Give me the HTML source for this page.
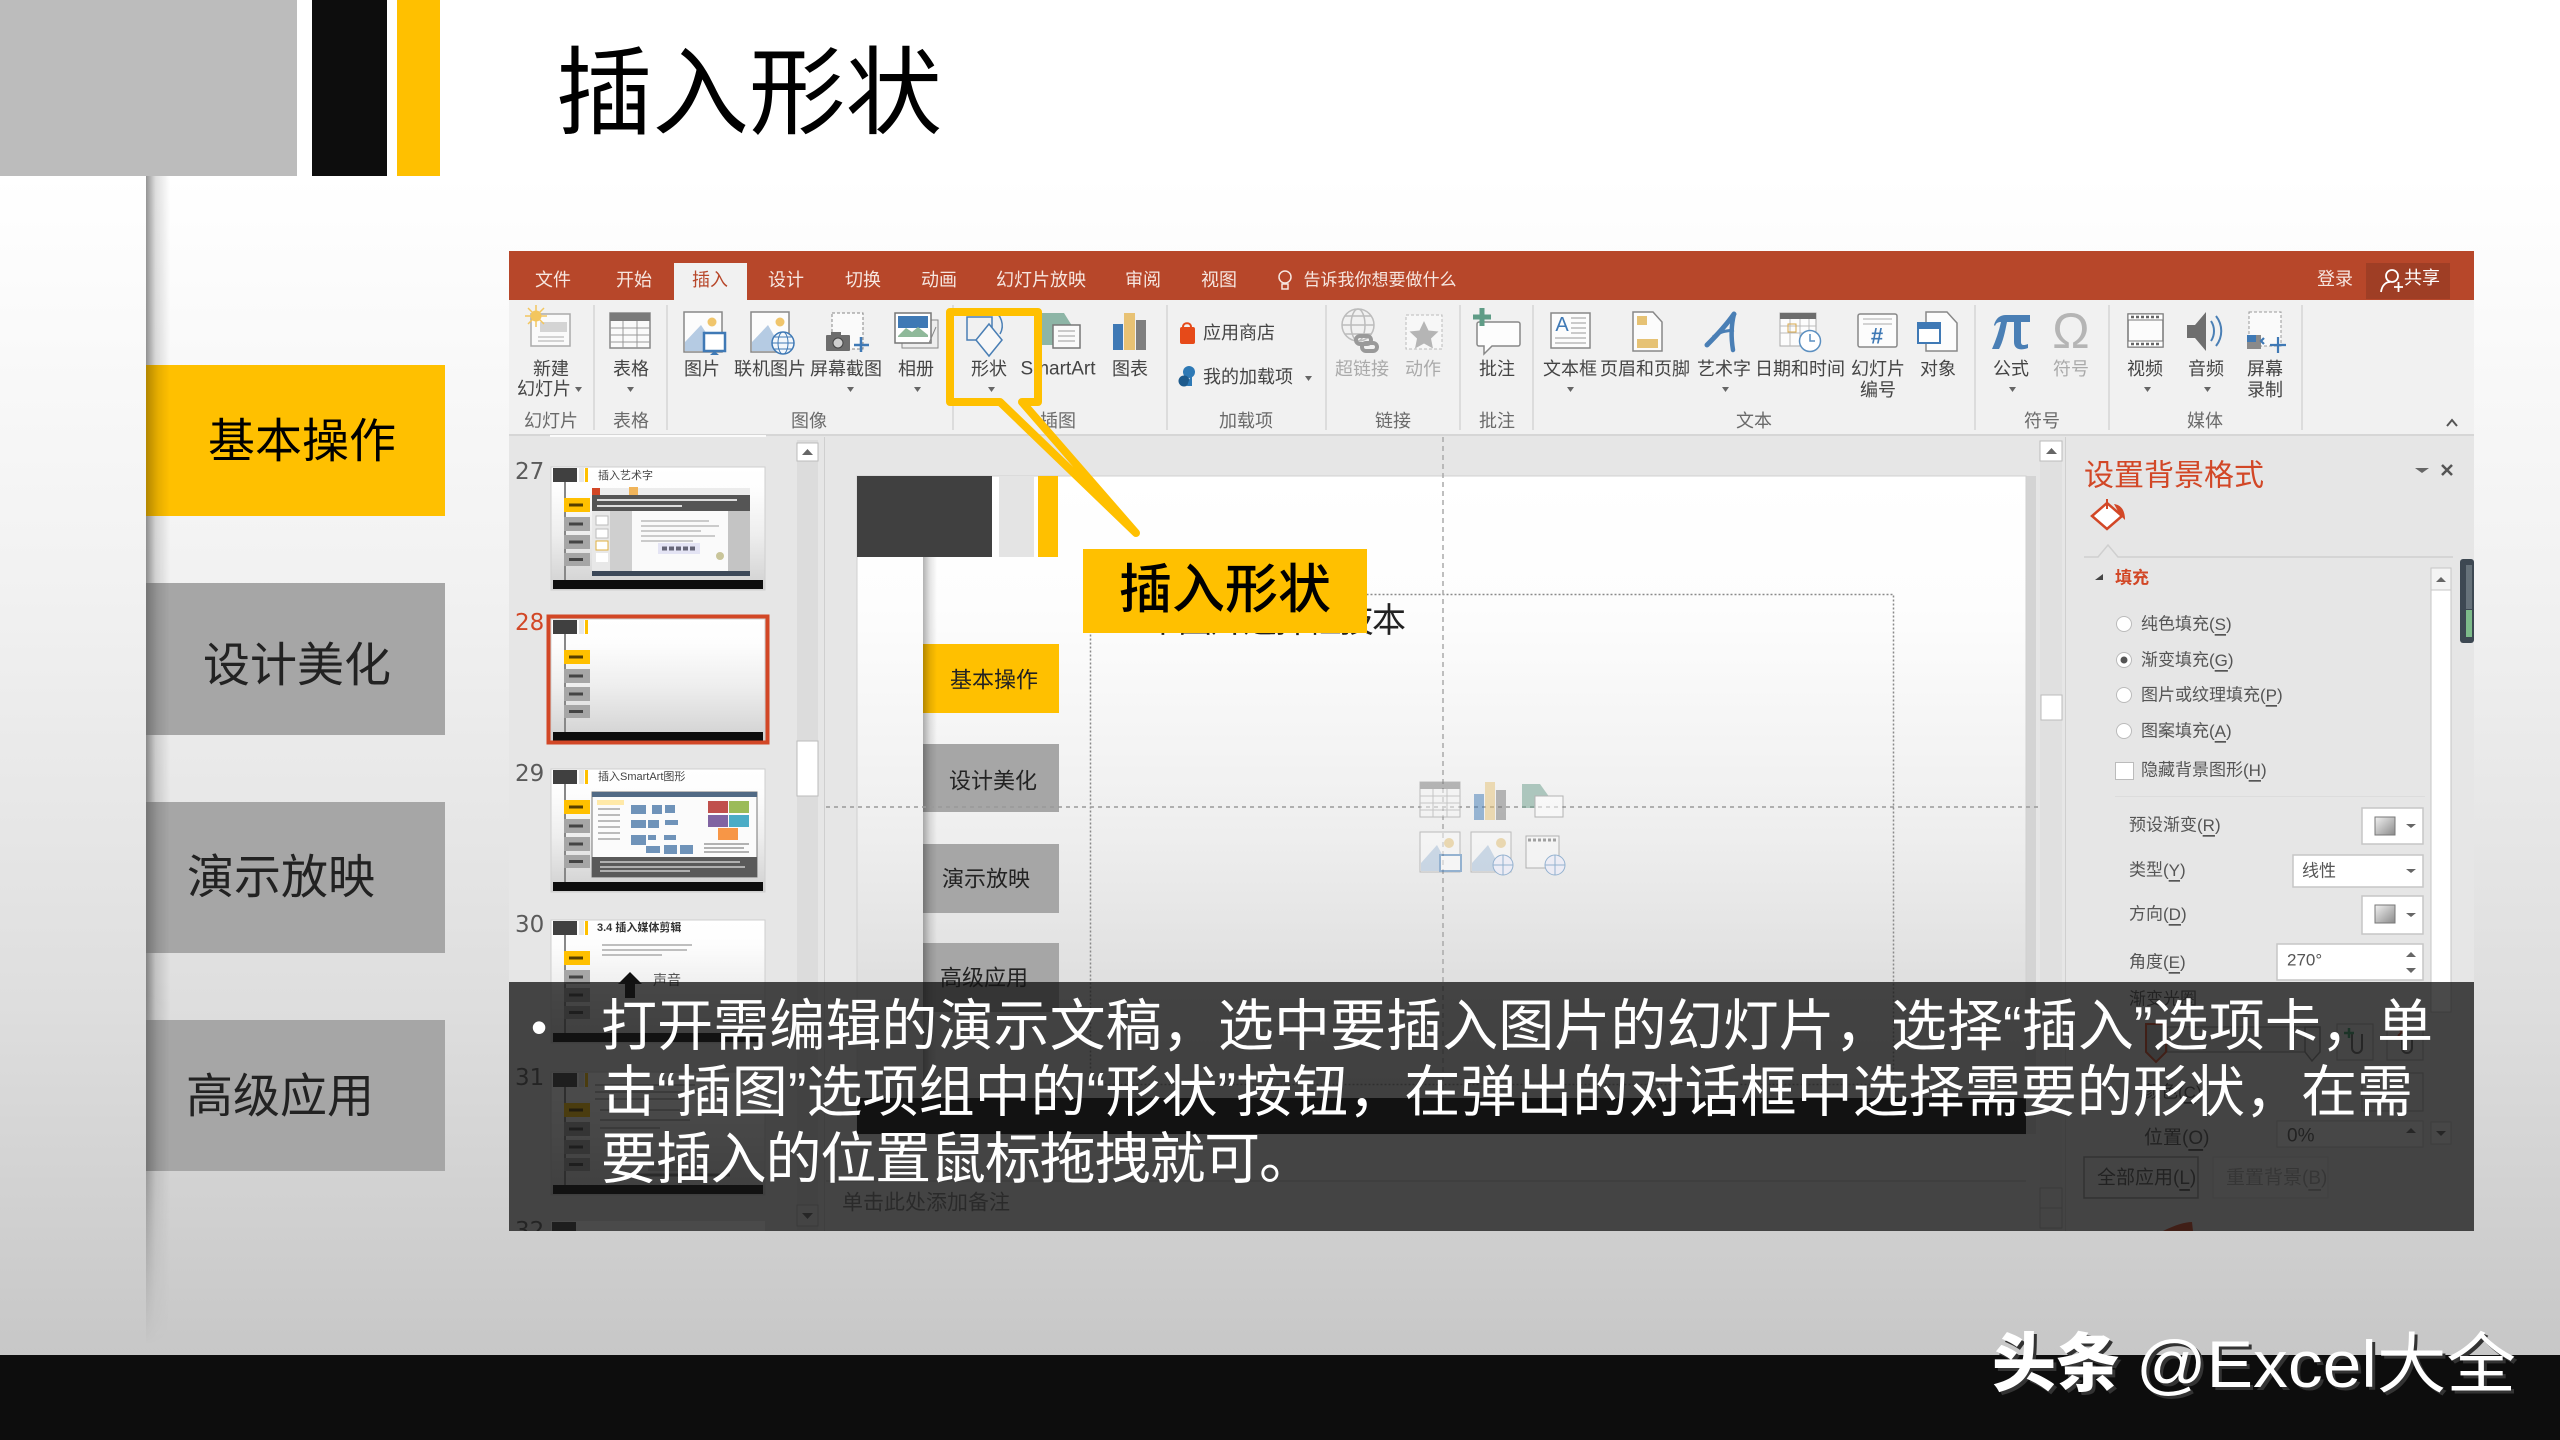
<!DOCTYPE html>
<html lang="zh-CN">
<head>
<meta charset="utf-8">
<title>插入形状</title>
<style>
html,body{margin:0;padding:0;width:2560px;height:1440px;overflow:hidden;background:#fff}
svg{display:block;position:absolute;left:0;top:0}
text{font-family:"Liberation Sans","Noto Sans CJK SC",sans-serif;dominant-baseline:central}
.r text{font-size:18px;fill:#444;text-anchor:middle}
.g text{font-size:18px;fill:#6a6a6a;text-anchor:middle}
.tab text{font-size:18px;fill:#f6e6e0;text-anchor:middle}
.p text{font-size:17px;fill:#555}
.ln{stroke:#d6d6d6;stroke-width:1.5}
</style>
</head>
<body>
<svg width="2560" height="1440" viewBox="0 0 2560 1440" xmlns="http://www.w3.org/2000/svg">
<defs>
<linearGradient id="bg" x1="0" y1="0" x2="0" y2="1">
<stop offset="0" stop-color="#ffffff"/><stop offset=".13" stop-color="#ffffff"/><stop offset=".44" stop-color="#f1f1f1"/><stop offset=".74" stop-color="#dedede"/><stop offset="1" stop-color="#c7c7c7"/>
</linearGradient>
<linearGradient id="sl" x1="0" y1="0" x2="0" y2="1">
<stop offset="0" stop-color="#ffffff"/><stop offset=".2" stop-color="#fdfdfd"/><stop offset=".55" stop-color="#eeeeee"/><stop offset="1" stop-color="#d0d0d0"/>
</linearGradient>
<linearGradient id="sh" x1="0" y1="0" x2="1" y2="0">
<stop offset="0" stop-color="#000" stop-opacity=".42"/><stop offset=".4" stop-color="#000" stop-opacity=".13"/><stop offset="1" stop-color="#000" stop-opacity="0"/>
</linearGradient>
<linearGradient id="sb" x1="0" y1="0" x2="1" y2="0">
<stop offset="0" stop-color="#000" stop-opacity=".3"/><stop offset=".5" stop-color="#000" stop-opacity=".1"/><stop offset="1" stop-color="#000" stop-opacity="0"/>
</linearGradient>
<linearGradient id="fade" gradientUnits="userSpaceOnUse" x1="0" y1="176" x2="0" y2="1345">
<stop offset="0" stop-color="#fff"/><stop offset=".7" stop-color="#fff"/><stop offset=".85" stop-color="#aaa"/><stop offset="1" stop-color="#000"/>
</linearGradient>
<linearGradient id="sw" x1="0" y1="0" x2="1" y2="1">
<stop offset="0" stop-color="#f2f2f2"/><stop offset="1" stop-color="#8a8a8a"/>
</linearGradient>
<mask id="m1" maskUnits="userSpaceOnUse" x="140" y="170" width="40" height="1190">
<rect x="140" y="170" width="40" height="1190" fill="url(#fade)"/>
</mask>
<clipPath id="c1"><rect x="509" y="1100" width="60" height="131"/></clipPath>
<g id="tb">
<rect width="214" height="123" fill="url(#sl)" stroke="#cfcfcf"/>
<rect x="2" y="1" width="24" height="14" fill="#404040"/>
<rect x="28" y="1" width="5" height="14" fill="#e8e8e8"/>
<rect x="34" y="1" width="3" height="14" fill="#ffc000"/>
<rect x="13" y="15" width="2" height="98" fill="#888"/>
<rect x="13" y="31" width="26" height="14" fill="#ffc000"/>
<rect x="13" y="50" width="26" height="14" fill="#a6a6a6"/>
<rect x="13" y="68" width="26" height="14" fill="#a6a6a6"/>
<rect x="13" y="86" width="26" height="13" fill="#a6a6a6"/>
<rect x="18" y="36.500" width="14" height="3" fill="#553f00"/>
<rect x="18" y="55.500" width="14" height="3" fill="#444"/>
<rect x="18" y="73.500" width="14" height="3" fill="#444"/>
<rect x="18" y="91" width="14" height="3" fill="#444"/>
<rect x="2" y="113" width="210" height="9" fill="#0d0d0d"/>
</g>
</defs>

<!-- page background -->
<rect x="0" y="0" width="2560" height="1356" fill="url(#bg)"/>
<rect x="146" y="176" width="24" height="1180" fill="url(#sh)" mask="url(#m1)"/>
<rect x="0" y="0" width="297" height="176" fill="#bcbcbc"/>
<rect x="312" y="0" width="75" height="176" fill="#0d0d0d"/>
<rect x="397" y="0" width="43" height="176" fill="#ffc000"/>
<text x="556" y="94" font-size="96" fill="#000" textLength="386" lengthAdjust="spacingAndGlyphs">插入形状</text>

<!-- sidebar -->
<rect x="146" y="365" width="299" height="151" fill="#ffc000"/>
<rect x="146" y="583" width="299" height="152" fill="#a6a6a6"/>
<rect x="146" y="802" width="299" height="151" fill="#a6a6a6"/>
<rect x="146" y="1020" width="299" height="151" fill="#a6a6a6"/>
<rect x="146" y="365" width="24" height="151" fill="url(#sb)"/>
<rect x="146" y="583" width="24" height="152" fill="url(#sb)"/>
<rect x="146" y="802" width="24" height="151" fill="url(#sb)"/>
<rect x="146" y="1020" width="24" height="151" fill="url(#sb)"/>
<g font-size="47" text-anchor="middle">
<text x="302" y="441" fill="#000">基本操作</text>
<text x="297" y="665" fill="#222">设计美化</text>
<text x="281" y="877" fill="#222">演示放映</text>
<text x="280" y="1096" fill="#222">高级应用</text>
</g>

<!-- screenshot: tabs -->
<rect x="509" y="251" width="1965" height="49" fill="#b7472a"/>
<rect x="674" y="263" width="73" height="38" fill="#f1f1f1"/>
<g class="tab">
<text x="553" y="280">文件</text><text x="634" y="280">开始</text>
<text x="710" y="280" style="fill:#b7472a">插入</text>
<text x="786" y="280">设计</text><text x="863" y="280">切换</text><text x="939" y="280">动画</text>
<text x="1041" y="280">幻灯片放映</text><text x="1143" y="280">审阅</text><text x="1219" y="280">视图</text>
<text x="1380" y="280" style="font-size:17px">告诉我你想要做什么</text>
<text x="2335" y="279">登录</text>
</g>
<circle cx="1285" cy="277" r="6" fill="none" stroke="#f6e6e0" stroke-width="1.500"/>
<path d="M1282,284h6v5h-6z" fill="none" stroke="#f6e6e0" stroke-width="1.500"/>
<rect x="2366" y="263" width="84" height="36" fill="#9f3e25"/>
<circle cx="2392" cy="276" r="6" fill="none" stroke="#fff" stroke-width="1.800"/>
<path d="M2381,292c1-7 5-10 9-10M2394,287h9M2398.500,282v10" fill="none" stroke="#fff" stroke-width="1.800"/>
<text x="2422" y="278" font-size="18" text-anchor="middle" fill="#fff">共享</text>

<!-- ribbon -->
<rect x="509" y="300" width="1965" height="135" fill="#f1f1f1"/>
<rect x="509" y="435" width="1965" height="796" fill="#e6e6e6"/>
<rect x="509" y="434" width="1965" height="2" fill="#d6d6d6"/>
<g class="ln">
<path d="M594,305V430M667,305V430M953,305V430M1167,305V430M1326,305V430M1460,305V430M1533,305V430M1975,305V430M2109,305V430M2302,305V430"/>
</g>

<!-- ribbon icons -->
<!-- new slide -->
<rect x="531" y="314" width="39" height="32" fill="#fafafa" stroke="#aaa" stroke-width="1.500"/>
<rect x="540" y="322" width="27" height="10" fill="#d4d4d4"/>
<path d="M538,337h26M538,341h26" stroke="#aaa"/>
<circle cx="536" cy="316" r="5.500" fill="#f3c65f"/>
<path d="M536,305v22M525,316h22M528,308l16,16M544,308l-16,16" stroke="#f3c65f" stroke-width="1.500"/>
<!-- table -->
<rect x="610" y="313" width="40" height="35" fill="#fafafa" stroke="#888" stroke-width="1.500"/>
<rect x="610" y="313" width="40" height="8" fill="#7a7a7a"/>
<path d="M623,321v27M637,321v27M610,328h40M610,335h40M610,342h40" stroke="#999"/>
<!-- picture -->
<rect x="684" y="312" width="38" height="40" fill="#fcfcfc" stroke="#888" stroke-width="1.500"/>
<circle cx="712" cy="322" r="4.500" fill="#f0c56b"/>
<path d="M685,351V342L701,325L718,351Z" fill="#b5cbe3"/>
<rect x="704" y="333" width="21" height="18" fill="#fff" stroke="#3f79b5" stroke-width="2.500"/>
<path d="M710,355h9l-4.500,-4z" fill="#3f79b5"/>
<!-- online pic -->
<rect x="751" y="312" width="38" height="40" fill="#fcfcfc" stroke="#888" stroke-width="1.500"/>
<circle cx="780" cy="322" r="4.500" fill="#f0c56b"/>
<path d="M752,351V342L768,325L783,351Z" fill="#b5cbe3"/>
<circle cx="783" cy="343" r="11" fill="#f3f7fb" stroke="#3f79b5" stroke-width="1.500"/>
<ellipse cx="783" cy="343" rx="5" ry="11" fill="none" stroke="#3f79b5"/>
<path d="M772,343h22M774,337h18M774,349h18" stroke="#3f79b5"/>
<!-- screenshot -->
<rect x="832" y="313" width="31" height="36" fill="#fafafa" stroke="#888" stroke-dasharray="3 2"/>
<rect x="826" y="335" width="24" height="16" rx="1" fill="#6d6d6d"/>
<circle cx="838" cy="343" r="5" fill="#cfcfcf" stroke="#444"/>
<rect x="831" y="332" width="10" height="4" fill="#6d6d6d"/>
<path d="M861,337v15M854,345h15" stroke="#3f79b5" stroke-width="2.500"/>
<!-- album -->
<rect x="902" y="320" width="36" height="28" fill="#eee" stroke="#888"/>
<rect x="895" y="313" width="36" height="30" fill="#fff" stroke="#777" stroke-width="1.500"/>
<rect x="898" y="316" width="30" height="12" fill="#3f79b5"/>
<path d="M898,336l8,-8l6,4l6,-5l10,8v2h-30z" fill="#8fb99a"/>
<path d="M929,343l7,-16" stroke="#888"/>
<!-- shapes -->
<rect x="967" y="317" width="25" height="23" fill="none" stroke="#4a7fb5" stroke-width="1.500"/>
<path d="M992,310a17,17 0 0 1 8,24" fill="none" stroke="#4a7fb5" stroke-width="1.500"/>
<path d="M989,327l13,16l-13,16l-13,-16z" fill="#f8f8f8" stroke="#4a7fb5" stroke-width="1.500" transform="translate(0,-3)"/>
<!-- smartart -->
<path d="M1042,313h22l10,16l-10,16h-22z" fill="#8db5a6"/>
<rect x="1053" y="325" width="27" height="23" fill="#fafafa" stroke="#777" stroke-width="1.500"/>
<path d="M1058,331h17M1058,336h17M1058,341h17" stroke="#999"/>
<!-- chart -->
<rect x="1113" y="324" width="10" height="26" fill="#3f79b5"/>
<rect x="1124" y="313" width="11" height="37" fill="#e8c274"/>
<rect x="1136" y="320" width="10" height="30" fill="#7f7f7f"/>
<!-- store -->
<rect x="1180" y="327" width="15" height="17" rx="2" fill="#e64a19"/>
<path d="M1183,327c0,-5 8,-5 8,0" fill="none" stroke="#e64a19" stroke-width="2"/>
<circle cx="1189" cy="372" r="6" fill="#2e79b5"/>
<circle cx="1184" cy="381" r="5.500" fill="#1d5a8c"/>
<path d="M1192,372v14h-5z" fill="#2e79b5"/>
<!-- hyperlink -->
<g fill="none" stroke="#bcbcbc" stroke-width="1.500">
<circle cx="1358" cy="325" r="16"/><ellipse cx="1358" cy="325" rx="7" ry="16"/>
<path d="M1342,325h32M1345,316h26M1345,334h26"/>
</g>
<g fill="none" stroke="#999" stroke-width="4"><rect x="1356" y="336" width="15" height="8" rx="4"/><rect x="1362" y="343" width="15" height="8" rx="4"/></g>
<!-- action -->
<rect x="1406" y="315" width="36" height="34" fill="#f7f7f7" stroke="#bbb" stroke-dasharray="3 2"/>
<path d="M1424,321l4.500,9.500l10,1l-7.500,7l2,10l-9,-5l-9,5l2,-10l-7.500,-7l10,-1z" fill="#b5b5b5"/>
<!-- comment -->
<path d="M1479,322h39a2,2 0 0 1 2,2v20a2,2 0 0 1 -2,2h-26l-8,8v-8h-5a2,2 0 0 1 -2,-2v-20a2,2 0 0 1 2,-2z" fill="#fdfdfd" stroke="#888" stroke-width="1.500"/>
<path d="M1482,308v18M1473,317h18" stroke="#5f9c86" stroke-width="5"/>
<!-- text box -->
<rect x="1551" y="313" width="39" height="35" fill="#fcfcfc" stroke="#888" stroke-width="1.500"/>
<text x="1562" y="325" font-size="20" fill="#3f79b5" text-anchor="middle">A</text>
<path d="M1571,318h15M1571,323h15M1571,328h15M1571,333h15M1555,338h31M1555,343h31" stroke="#999"/>
<!-- header footer -->
<path d="M1633,312h20l9,10v29h-29z" fill="#fcfcfc" stroke="#888" stroke-width="1.500"/>
<rect x="1637" y="316" width="10" height="9" fill="#e6c274"/>
<rect x="1637" y="339" width="21" height="9" fill="#e6c274"/>
<!-- wordart -->
<path d="M1734,314C1727,324 1716,336 1707,345" fill="none" stroke="#4a7fb5" stroke-width="5" stroke-linecap="round"/>
<path d="M1734,314C1731,326 1731,338 1733,350" fill="none" stroke="#4a7fb5" stroke-width="4.500" stroke-linecap="round"/>
<path d="M1713,337C1720,331 1727,331 1734,330" fill="none" stroke="#4a7fb5" stroke-width="3"/>
<!-- date -->
<rect x="1780" y="313" width="36" height="33" fill="#fcfcfc" stroke="#aaa"/>
<rect x="1780" y="313" width="36" height="6" fill="#6d6d6d"/>
<path d="M1780,326h36M1780,333h36M1790,319v27M1800,319v27M1809,319v27" stroke="#bbb"/>
<rect x="1788" y="324" width="8" height="8" fill="none" stroke="#d9a84a"/>
<circle cx="1810" cy="341" r="10.500" fill="#fff" stroke="#5b8fc0" stroke-width="1.500"/>
<path d="M1810,334v7h5" fill="none" stroke="#5b8fc0" stroke-width="1.500"/>
<!-- slide number -->
<rect x="1858" y="314" width="39" height="33" rx="2" fill="#fcfcfc" stroke="#888" stroke-width="1.500"/>
<path d="M1863,319h29M1863,324h29" stroke="#aaa"/>
<text x="1877" y="336" font-size="22" font-weight="700" fill="#3f79b5" text-anchor="middle">#</text>
<!-- object -->
<path d="M1926,312h21l10,11v28h-31z" fill="#fcfcfc" stroke="#888" stroke-width="1.500"/>
<rect x="1918" y="323" width="22" height="20" fill="#fff" stroke="#3f79b5" stroke-width="2"/>
<rect x="1918" y="323" width="22" height="6" fill="#3f79b5"/>
<!-- pi icon -->
<path d="M1994,325C1996,318 2000,315 2006,315H2030V322H2021V342C2021,345 2023,346 2028,344V348C2020,351 2014,349 2014,342V322H2007C2005,332 2003,342 1999,349H1992C1996,340 1999,331 2001,322C1998,322 1996,323 1995,326Z" fill="#4a7fb5"/>
<text x="2071" y="331" font-size="50" fill="#b5b5b5" text-anchor="middle" style="font-family:'Liberation Sans',sans-serif">Ω</text>
<!-- video -->
<rect x="2128" y="314" width="35" height="33" fill="#fcfcfc" stroke="#777" stroke-width="1.500"/>
<rect x="2128" y="314" width="35" height="6" fill="#fff" stroke="#777"/>
<rect x="2128" y="341" width="35" height="6" fill="#fff" stroke="#777"/>
<path d="M2131,317h29M2131,344h29" stroke="#666" stroke-width="2.500" stroke-dasharray="3 2"/>
<!-- audio -->
<path d="M2187,325h8l11,-13v39l-11,-13h-8z" fill="#6e6e6e"/>
<path d="M2211,321c4,6 4,14 0,20M2216,316c7,9 7,21 0,30" fill="none" stroke="#4a7fb5" stroke-width="2"/>
<!-- screen rec -->
<rect x="2249" y="312" width="32" height="34" fill="#fafafa" stroke="#999" stroke-dasharray="3 2"/>
<rect x="2247" y="335" width="14" height="14" fill="#8a8a8a"/><rect x="2247" y="335" width="9" height="7" fill="#3f79b5"/>
<path d="M2264,338l-3,3l3,3M2278,337v16M2270,345h16" fill="none" stroke="#3f79b5" stroke-width="2.200"/>

<!-- ribbon labels -->
<g class="r">
<text x="551" y="369">新建</text><text x="544" y="389">幻灯片</text>
<text x="631" y="369">表格</text>
<text x="702" y="369">图片</text><text x="770" y="369">联机图片</text><text x="846" y="369">屏幕截图</text><text x="916" y="369">相册</text>
<text x="989" y="369">形状</text><text x="1058" y="369" style="font-size:19px">SmartArt</text><text x="1130" y="369">图表</text>
<text x="1239" y="333">应用商店</text><text x="1248" y="377">我的加载项</text>
<text x="1362" y="369" style="fill:#aaa">超链接</text><text x="1423" y="369" style="fill:#aaa">动作</text>
<text x="1497" y="369">批注</text>
<text x="1570" y="369">文本框</text><text x="1645" y="369">页眉和页脚</text><text x="1724" y="369">艺术字</text><text x="1800" y="369">日期和时间</text>
<text x="1878" y="369">幻灯片</text><text x="1878" y="390">编号</text><text x="1938" y="369">对象</text>
<text x="2011" y="369">公式</text><text x="2071" y="369" style="fill:#aaa">符号</text>
<text x="2145" y="369">视频</text><text x="2206" y="369">音频</text>
<text x="2265" y="369">屏幕</text><text x="2265" y="390">录制</text>
</g>
<g fill="#666">
<path d="M575,387h7l-3.500,5z"/><path d="M627,387h7l-3.500,5z"/><path d="M847,387h7l-3.500,5z"/><path d="M914,387h7l-3.500,5z"/><path d="M988,387h7l-3.500,5z"/>
<path d="M1305,376h7l-3.500,5z"/><path d="M1567,387h7l-3.500,5z"/><path d="M1722,387h7l-3.500,5z"/><path d="M2009,387h7l-3.500,5z"/><path d="M2144,387h7l-3.500,5z"/><path d="M2204,387h7l-3.500,5z"/>
</g>
<path d="M2447,426l5,-6l5,6" fill="none" stroke="#555" stroke-width="2"/>
<g class="g">
<text x="551" y="421">幻灯片</text><text x="631" y="421">表格</text><text x="809" y="421">图像</text><text x="1058" y="421">插图</text>
<text x="1246" y="421">加载项</text><text x="1393" y="421">链接</text><text x="1497" y="421">批注</text><text x="1754" y="421">文本</text><text x="2042" y="421">符号</text><text x="2205" y="421">媒体</text>
</g>

<!-- thumbnail pane -->
<rect x="550" y="435" width="216" height="2" fill="#fbfbfb"/>
<g font-size="23" fill="#5a5a5a" style="font-family:'DejaVu Sans',sans-serif">
<text x="515" y="472" style="font-family:'DejaVu Sans',sans-serif">27</text>
<text x="515" y="623" fill="#d24726" style="font-family:'DejaVu Sans',sans-serif">28</text>
<text x="515" y="774" style="font-family:'DejaVu Sans',sans-serif">29</text>
<text x="515" y="925" style="font-family:'DejaVu Sans',sans-serif">30</text>
<text x="515" y="1078" style="font-family:'DejaVu Sans',sans-serif">31</text>
<text x="515" y="1231" clip-path="url(#c1)" style="font-family:'DejaVu Sans',sans-serif">32</text>
</g>
<!-- 27 -->
<use href="#tb" x="551" y="467"/>
<text x="598" y="476" font-size="11" fill="#444">插入艺术字</text>
<rect x="592" y="488" width="158" height="88" fill="#dcdcdc"/>
<rect x="592" y="488" width="158" height="7" fill="#ececec"/>
<rect x="592" y="488" width="8" height="7" fill="#d24726"/><rect x="629" y="487" width="9" height="8" fill="#f0b45a"/>
<rect x="592" y="495" width="158" height="16" fill="#555"/>
<path d="M597,500h140M597,506h85" stroke="#ddd" stroke-width="2"/>
<rect x="592" y="511" width="18" height="60" fill="#e8e8e8"/>
<rect x="596" y="516" width="12" height="9" fill="#fff" stroke="#bbb"/><rect x="596" y="529" width="12" height="9" fill="#fff" stroke="#bbb"/><rect x="596" y="541" width="12" height="9" fill="#fff" stroke="#e0b040"/><rect x="596" y="553" width="12" height="9" fill="#fff"/>
<rect x="610" y="511" width="22" height="60" fill="#cfcfcf"/>
<rect x="632" y="511" width="96" height="60" fill="#fafafa"/>
<rect x="728" y="511" width="22" height="60" fill="#c4c4c4"/>
<path d="M641,521h68M641,526h78M641,531h60M641,536h74M641,541h52" stroke="#bbb" stroke-width="1.500"/>
<rect x="658" y="543" width="42" height="11" fill="#e4e4f4"/>
<path d="M662,548.500h34" stroke="#667" stroke-width="4" stroke-dasharray="5 2"/>
<circle cx="720" cy="556" r="4" fill="#c9c59a"/>
<rect x="592" y="571" width="158" height="5" fill="#3c4858"/>
<!-- 28 -->
<use href="#tb" x="551" y="619"/>
<rect x="548.500" y="616.500" width="219" height="126" fill="none" stroke="#d24726" stroke-width="4"/>
<!-- 29 -->
<use href="#tb" x="551" y="769"/>
<text x="598" y="777" font-size="11" fill="#444">插入SmartArt图形</text>
<rect x="592" y="792" width="165" height="85" fill="#fbfbfb" stroke="#777"/>
<rect x="592" y="792" width="165" height="5" fill="#516a85"/>
<rect x="597" y="800" width="27" height="5" fill="#ffe9a8"/>
<path d="M598,809h22M598,815h22M598,821h22M598,827h22M598,833h22M598,839h22" stroke="#bbb" stroke-width="2"/>
<g fill="#6f93b9"><rect x="631" y="805" width="15" height="9"/><rect x="652" y="805" width="10" height="9"/><rect x="665" y="805" width="10" height="8"/><rect x="631" y="820" width="15" height="8"/><rect x="648" y="820" width="11" height="8"/><rect x="665" y="820" width="13" height="5"/><rect x="631" y="835" width="15" height="10"/><rect x="648" y="835" width="8" height="5"/><rect x="664" y="835" width="12" height="5"/><rect x="646" y="846" width="14" height="7"/><rect x="664" y="845" width="13" height="9"/><rect x="680" y="845" width="13" height="9"/></g>
<rect x="708" y="801" width="20" height="12" fill="#c0504d"/><rect x="729" y="801" width="20" height="12" fill="#9bbb59"/>
<rect x="708" y="815" width="20" height="12" fill="#8064a2"/><rect x="729" y="815" width="20" height="12" fill="#4bacc6"/>
<rect x="718" y="828" width="20" height="12" fill="#f79646"/>
<path d="M704,844h45M704,848h40M704,852h45" stroke="#999" stroke-width="1.500"/>
<rect x="592" y="857" width="165" height="20" fill="#5a5a5a"/>
<path d="M600,862h140M600,867h145M600,871h90" stroke="#ccc" stroke-width="1.500"/>
<!-- 30 -->
<use href="#tb" x="551" y="920"/>
<text x="597" y="928" font-size="11" font-weight="700" fill="#333">3.4 插入媒体剪辑</text>
<path d="M602,945h90M602,950h85M602,955h60" stroke="#aaa" stroke-width="1.500"/>
<path d="M630,972l-12,12h7v14h10v-14h7z" fill="#111"/>
<text x="653" y="980" font-size="14" fill="#555">声音</text>
<!-- 31 -->
<use href="#tb" x="551" y="1072"/>
<path d="M595,1085h100M595,1092h130M595,1099h90M600,1110h80M600,1120h90M600,1128h60" stroke="#aaa" stroke-width="1.500"/>
<path d="M630,1175h100" stroke="#777" stroke-width="3"/>
<rect x="648" y="1163" width="60" height="8" fill="#bbb"/>
<!-- 32 -->
<rect x="551" y="1221" width="214" height="10" fill="#fff"/><rect x="552" y="1222" width="24" height="9" fill="#404040"/>

<!-- thumbnail scrollbar -->
<rect x="797" y="440" width="21" height="790" fill="#dcdcdc"/>
<rect x="797" y="443" width="21" height="18" fill="#fff" stroke="#bbb"/>
<path d="M802,455l5.500,-6l5.500,6z" fill="#666"/>
<rect x="797" y="741" width="21" height="55" fill="#fff" stroke="#bbb"/>
<rect x="797" y="1205" width="21" height="21" fill="#e6e6e6" stroke="#bbb"/>
<path d="M802,1213l5.500,6l5.500,-6z" fill="#666"/>
<rect x="824" y="437" width="1" height="794" fill="#cfcfcf"/>

<!-- main slide -->
<rect x="2026" y="476" width="10" height="658" fill="#d4d4d4"/>
<rect x="857" y="476" width="1169" height="658" fill="url(#sl)" stroke="#d0d0d0"/>
<rect x="923" y="557" width="14" height="541" fill="url(#sb)"/>
<rect x="857" y="476" width="135" height="81" fill="#404040"/>
<rect x="999" y="476" width="35" height="81" fill="#e4e4e4"/>
<rect x="1038" y="476" width="20" height="81" fill="#ffc000"/>
<rect x="923" y="644" width="136" height="69" fill="#ffc000"/>
<rect x="923" y="744" width="136" height="68" fill="#a6a6a6"/>
<rect x="923" y="844" width="136" height="69" fill="#a6a6a6"/>
<rect x="923" y="943" width="136" height="69" fill="#a6a6a6"/>
<rect x="923" y="644" width="14" height="69" fill="url(#sb)"/>
<rect x="923" y="744" width="14" height="68" fill="url(#sb)"/>
<rect x="923" y="844" width="14" height="69" fill="url(#sb)"/>
<rect x="923" y="943" width="14" height="69" fill="url(#sb)"/>
<g font-size="22" text-anchor="middle" fill="#222">
<text x="994" y="680">基本操作</text><text x="993" y="781">设计美化</text><text x="986" y="879">演示放映</text><text x="984" y="978">高级应用</text>
</g>
<rect x="857" y="1098" width="1169" height="36" fill="#0d0d0d"/>
<text x="1146" y="621" font-size="34" fill="#222" textLength="260">中图片选择框技本</text>
<rect x="1090.500" y="594.500" width="803" height="490" fill="none" stroke="#8a8a8a" stroke-width="1.500" stroke-dasharray="2 2"/>
<path d="M826,807H2040" stroke="#999" stroke-width="1.500" stroke-dasharray="4 4"/>
<path d="M1443,437V1090" stroke="#aaa" stroke-width="1.500" stroke-dasharray="5 4"/>
<!-- content icons -->
<g opacity=".5">
<rect x="1420" y="782" width="40" height="35" fill="#f6f6f6" stroke="#888"/><rect x="1420" y="782" width="40" height="7" fill="#777"/><path d="M1433,789v28M1447,789v28M1420,796h40M1420,803h40M1420,810h40" stroke="#999"/>
<rect x="1474" y="794" width="10" height="26" fill="#3f79b5"/><rect x="1485" y="782" width="10" height="38" fill="#e6c274"/><rect x="1496" y="790" width="10" height="30" fill="#777"/>
<path d="M1522,784h18l10,14l-10,10h-18z" fill="#6a9d8a"/><rect x="1535" y="796" width="28" height="21" fill="#fff" stroke="#777"/>
<rect x="1420" y="832" width="40" height="40" fill="#fafafa" stroke="#888"/><circle cx="1449" cy="843" r="5" fill="#e6c274"/><path d="M1421,871v-8l16,-18l14,26z" fill="#a7c1dd"/><rect x="1440" y="855" width="21" height="16" fill="#fff" stroke="#3f79b5" stroke-width="2"/>
<rect x="1471" y="832" width="40" height="40" fill="#fafafa" stroke="#888"/><circle cx="1501" cy="843" r="5" fill="#e6c274"/><path d="M1472,871v-8l16,-18l14,26z" fill="#a7c1dd"/><circle cx="1503" cy="865" r="10" fill="#eef" stroke="#3f79b5"/><path d="M1493,865h20M1503,855v20" stroke="#3f79b5"/>
<rect x="1526" y="836" width="33" height="32" fill="#fafafa" stroke="#777"/><path d="M1528,840h29" stroke="#555" stroke-width="3" stroke-dasharray="3 2"/><circle cx="1555" cy="865" r="10" fill="#eef" stroke="#3f79b5"/><path d="M1545,865h20M1555,855v20" stroke="#3f79b5"/>
</g>

<!-- notes area -->
<path d="M826,1181H2026" stroke="#c8c8c8" stroke-width="1.500"/>
<text x="842" y="1203" font-size="21" fill="#777">单击此处添加备注</text>

<!-- main scrollbar -->
<rect x="2040" y="441" width="22" height="790" fill="#e0e0e0"/>
<rect x="2040" y="441" width="22" height="20" fill="#fff" stroke="#bbb"/>
<path d="M2046,454l5.500,-6l5.500,6z" fill="#666"/>
<rect x="2041" y="695" width="21" height="25" fill="#fff" stroke="#bbb"/>
<rect x="2065" y="437" width="1" height="794" fill="#cfcfcf"/>
<rect x="2040" y="1188" width="22" height="20" fill="#e6e6e6" stroke="#bbb"/><rect x="2040" y="1208" width="22" height="20" fill="#e6e6e6" stroke="#bbb"/>

<!-- right pane -->
<text x="2084" y="476" font-size="30" fill="#d24726">设置背景格式</text>
<path d="M2415,468h14l-7,5z" fill="#666"/>
<path d="M2442,465l10,10M2452,465l-10,10" stroke="#555" stroke-width="2.500"/>
<path d="M2107,503l15,13l-15,13l-15,-13z" fill="#fff" stroke="#d24726" stroke-width="2.500"/>
<path d="M2107,499v10" stroke="#d24726" stroke-width="2"/><path d="M2114,504c7,1 11,6 11,16l-5,-5z" fill="#d24726"/>
<path d="M2084,557h14l10,-12l10,12H2453" fill="none" stroke="#cfcfcf" stroke-width="1.500"/>
<path d="M2095,580l8,-6v6z" fill="#444"/>
<text x="2115" y="578" font-size="17" font-weight="700" fill="#d24726">填充</text>
<g fill="#fff" stroke="#bbb"><circle cx="2124" cy="624" r="7.500"/><circle cx="2124" cy="660" r="7.500"/><circle cx="2124" cy="695" r="7.500"/><circle cx="2124" cy="731" r="7.500"/><rect x="2115.500" y="762.500" width="18" height="17"/></g>
<circle cx="2124" cy="660" r="3.500" fill="#555"/>
<rect x="2115" y="796" width="310" height="1" fill="#dcdcdc"/>
<g fill="#fff" stroke="#c6c6c6" stroke-width="1.500">
<rect x="2362" y="808" width="61" height="36"/><rect x="2293" y="855" width="130" height="32"/><rect x="2362" y="896" width="61" height="38"/><rect x="2277" y="944" width="146" height="36"/>
</g>
<rect x="2277" y="1121" width="146" height="26" fill="#f2f2f2" stroke="#c6c6c6"/>
<rect x="2375" y="817" width="20" height="18" fill="url(#sw)" stroke="#777"/><rect x="2375" y="905" width="20" height="18" fill="url(#sw)" stroke="#777"/>
<g fill="#666">
<path d="M2406,824h10l-5,4z"/><path d="M2406,869h10l-5,4z"/><path d="M2406,913h10l-5,4z"/>
<path d="M2406,957l5,-5l5,5z"/><path d="M2406,968l5,5l5,-5z"/>
<path d="M2406,1133l5,-5l5,5z"/><path d="M2406,1143h10"/>
</g>
<rect x="2431" y="568" width="20" height="444" fill="#fff" stroke="#c6c6c6"/>
<rect x="2431" y="568" width="20" height="22" fill="#f4f4f4" stroke="#c6c6c6"/>
<path d="M2436,582l5,-5l5,5z" fill="#666"/>
<!-- gradient stop slider -->
<rect x="2167" y="1027" width="138" height="25" fill="#d8d8d8" stroke="#888"/>
<path d="M2146,1024h20v28l-10,10l-10,-10z" fill="#bbb" stroke="#d24726" stroke-width="2"/>
<path d="M2305,1027h15v25l-8,9l-7,-9z" fill="#ddd" stroke="#888" stroke-width="1.500"/>
<rect x="2337" y="1024" width="36" height="36" fill="#e6e6e6" stroke="#aaa"/>
<rect x="2387" y="1024" width="36" height="36" fill="#e6e6e6" stroke="#aaa"/>
<path d="M2352,1034v14a5,5 0 0 0 10,0v-14" fill="none" stroke="#666" stroke-width="2"/>
<path d="M2402,1040v8a5,5 0 0 0 10,0v-8" fill="none" stroke="#666" stroke-width="2"/>
<path d="M2349,1028v10M2344,1033h10" stroke="#3a9a6a" stroke-width="2.500"/><path d="M2398,1028l8,8M2406,1028l-8,8" stroke="#d24726" stroke-width="2"/>
<rect x="2362" y="1073" width="61" height="38" fill="#e6e6e6" stroke="#aaa"/>
<rect x="2084" y="1157" width="114" height="41" fill="#e6e6e6" stroke="#999" stroke-width="1.500"/>
<rect x="2213" y="1157" width="115" height="41" fill="#eaeaea" stroke="#d4d4d4"/>
<rect x="2431" y="1122" width="20" height="22" fill="#f2f2f2" stroke="#c6c6c6"/>
<path d="M2436,1131l5,5l5,-5z" fill="#666"/>
<path d="M2163,1231c12,-6 22,-9 29,-9l1,9z" fill="#d24726"/>
<g class="p">
<text x="2141" y="624">纯色填充(<tspan text-decoration="underline">S</tspan>)</text>
<text x="2141" y="660">渐变填充(<tspan text-decoration="underline">G</tspan>)</text>
<text x="2141" y="695">图片或纹理填充(<tspan text-decoration="underline">P</tspan>)</text>
<text x="2141" y="731">图案填充(<tspan text-decoration="underline">A</tspan>)</text>
<text x="2141" y="770">隐藏背景图形(<tspan text-decoration="underline">H</tspan>)</text>
<text x="2129" y="825">预设渐变(<tspan text-decoration="underline">R</tspan>)</text>
<text x="2129" y="870">类型(<tspan text-decoration="underline">Y</tspan>)</text>
<text x="2129" y="914">方向(<tspan text-decoration="underline">D</tspan>)</text>
<text x="2129" y="962">角度(<tspan text-decoration="underline">E</tspan>)</text>
<text x="2129" y="999">渐变光圈</text>
<text x="2144" y="1092">颜色(<tspan text-decoration="underline">C</tspan>)</text>
<text x="2144" y="1138" style="font-size:19px">位置(<tspan text-decoration="underline">O</tspan>)</text>
<text x="2302" y="871">线性</text>
<text x="2287" y="960">270°</text>
<text x="2287" y="1136" style="font-size:19px">0%</text>
<text x="2097" y="1178" style="font-size:19px">全部应用(<tspan text-decoration="underline">L</tspan>)</text>
<text x="2226" y="1178" style="font-size:19px;fill:#aaa">重置背景(<tspan text-decoration="underline">B</tspan>)</text>
</g>
<rect x="2460" y="559" width="14" height="84" rx="3" fill="#3d4852"/>
<path d="M2466,565h6v44h-6z" fill="#66727a"/>
<path d="M2466,610h6v27h-6z" fill="#7dbb8a"/>

<!-- dark overlay -->
<rect x="509" y="982" width="1965" height="249" fill="#141414" fill-opacity=".77"/>
<text x="531" y="1027" font-size="46" fill="#fff">•</text>
<g font-size="56" fill="#fff">
<text x="601" y="1026" textLength="1832">打开需编辑的演示文稿，选中要插入图片的幻灯片，选择“插入”选项卡，单</text>
<text x="601" y="1092" textLength="1812">击“插图”选项组中的“形状”按钮，在弹出的对话框中选择需要的形状，在需</text>
<text x="601" y="1159" textLength="714">要插入的位置鼠标拖拽就可。</text>
</g>

<!-- callout -->
<path d="M950,312H1038V402H1022L1136,533L1000,402H950Z" fill="none" stroke="#ffc000" stroke-width="8" stroke-linejoin="round"/>
<rect x="1083" y="549" width="284" height="84" fill="#ffc000"/>
<text x="1119" y="590" font-size="53" fill="#000" font-weight="500" textLength="212">插入形状</text>

<!-- bottom bar -->
<rect x="0" y="1355" width="2560" height="85" fill="#0d0d0d"/>
<g fill="#333" transform="translate(3,3)">
<text x="1992" y="1364" font-size="64" font-weight="900" textLength="128" lengthAdjust="spacingAndGlyphs">头条</text>
<text x="2136" y="1364" font-size="66" textLength="380" lengthAdjust="spacingAndGlyphs">@Excel大全</text>
</g>
<g fill="#fff">
<text x="1992" y="1364" font-size="64" font-weight="900" textLength="128" lengthAdjust="spacingAndGlyphs">头条</text>
<text x="2136" y="1364" font-size="66" textLength="380" lengthAdjust="spacingAndGlyphs">@Excel大全</text>
</g>
</svg>
</body>
</html>
